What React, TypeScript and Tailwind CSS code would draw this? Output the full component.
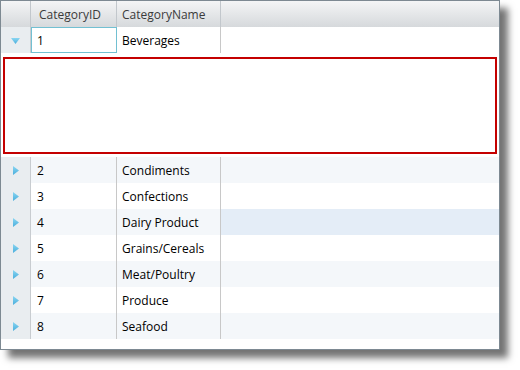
import { ReactNode } from "react";

const rows = [
  { id: 2, name: "Condiments" },
  { id: 3, name: "Confections" },
  { id: 4, name: "Dairy Product" },
  { id: 5, name: "Grains/Cereals" },
  { id: 6, name: "Meat/Poultry" },
  { id: 7, name: "Produce" },
  { id: 8, name: "Seafood" },
];

const RightArrow = () => (
  <svg width="6" height="9" viewBox="0 0 6 9">
    <defs>
      <linearGradient id="ra" x1="0" y1="0" x2="0" y2="1">
        <stop offset="0" stopColor="#8ad6f2" />
        <stop offset="1" stopColor="#4aaedc" />
      </linearGradient>
    </defs>
    <path d="M0 0 L6 4.5 L0 9 Z" fill="url(#ra)" />
  </svg>
);

const DownArrow = () => (
  <svg width="9" height="6" viewBox="0 0 9 6">
    <defs>
      <linearGradient id="da" x1="0" y1="0" x2="0" y2="1">
        <stop offset="0" stopColor="#8ad6f2" />
        <stop offset="1" stopColor="#4aaedc" />
      </linearGradient>
    </defs>
    <path d="M0 0 L9 0 L4.5 6 Z" fill="url(#da)" />
  </svg>
);

const Indicator = ({ children }: { children: ReactNode }) => (
  <div className="w-[30px] shrink-0 h-full bg-[#e9edf0] border-r border-[#c8ccd0] flex items-center justify-center pt-[1px]">
    {children}
  </div>
);

export default function App() {
  return (
    <div className="w-[520px] h-[370px] bg-white">
      <div
        className="w-[500px] h-[350px] border border-[#7d8992] bg-white flex flex-col shadow-[8px_8px_7px_rgba(0,0,0,0.55)] text-[12px] text-black"
        style={{ fontFamily: '"Open Sans", sans-serif' }}
      >
        {/* Header */}
        <div className="h-[26px] shrink-0 flex bg-gradient-to-b from-[#f4f5f6] to-[#d6d9dc] text-[#3b3b3b]">
          <div className="w-[30px] shrink-0 border-r border-[#c2c7cc]" />
          <div className="w-[86px] shrink-0 border-r border-[#c2c7cc] pl-[8px] pt-[1px] flex items-center">CategoryID</div>
          <div className="w-[104px] shrink-0 border-r border-[#c2c7cc] pl-[5px] pt-[1px] flex items-center">CategoryName</div>
          <div className="flex-1" />
        </div>

        {/* Expanded row */}
        <div className="h-[26px] shrink-0 flex bg-white">
          <Indicator>
            <DownArrow />
          </Indicator>
          <div className="w-[86px] shrink-0 border border-[#72c0d2] pl-[5px] pt-[1px] flex items-center">1</div>
          <div className="w-[104px] shrink-0 border-r border-[#c8c8c8] pl-[5px] pt-[1px] flex items-center">Beverages</div>
          <div className="flex-1" />
        </div>

        {/* Detail area */}
        <div className="h-[104px] shrink-0 pt-[4px] pb-[3px] pl-[2px] pr-[2px]">
          <div className="h-full border-2 border-[#c40000] bg-white" />
        </div>

        {rows.map((r, i) => {
          const alt = i % 2 === 0;
          const hover = r.id === 4;
          return (
            <div
              key={r.id}
              className={`h-[26px] shrink-0 flex ${alt ? "bg-[#f4f7fa]" : "bg-white"}`}
            >
              <Indicator>
                <RightArrow />
              </Indicator>
              <div className="w-[86px] shrink-0 border-r border-[#c8c8c8] pl-[6px] pt-[1px] flex items-center">{r.id}</div>
              <div className="w-[104px] shrink-0 border-r border-[#c8c8c8] pl-[5px] pt-[1px] flex items-center">{r.name}</div>
              <div className={`flex-1 ${hover ? "bg-[#e4edf7]" : ""}`} />
            </div>
          );
        })}
      </div>
    </div>
  );
}
